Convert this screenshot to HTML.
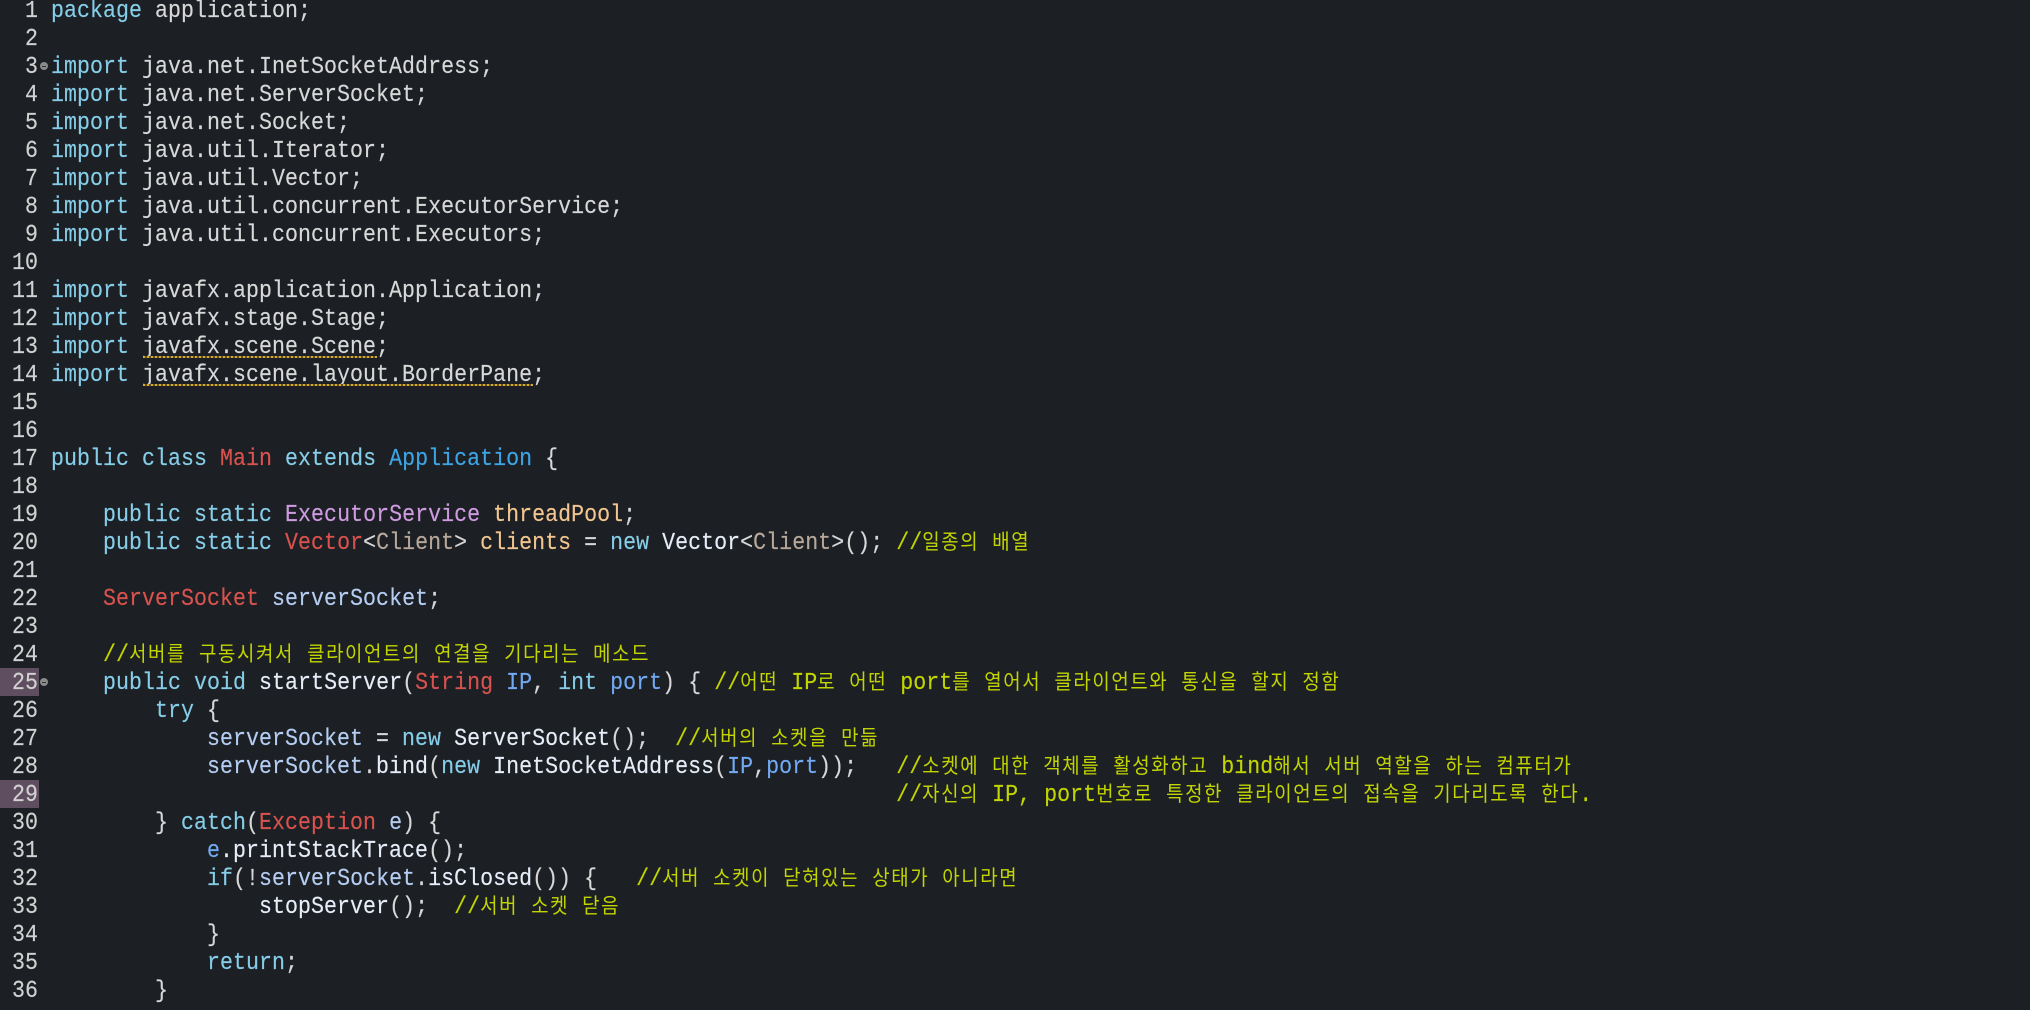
<!DOCTYPE html>
<html lang="ko"><head><meta charset="utf-8"><title>Main.java</title>
<style>
html,body{margin:0;padding:0;background:#1c2025;width:2030px;height:1010px;overflow:hidden}
#e{position:relative;width:2030px;height:1010px;overflow:hidden;font:24px/28px "Liberation Mono",monospace;letter-spacing:.044px;color:#d8d8d8;-webkit-text-stroke:.15px currentColor}
.n,.l{position:absolute;height:28px;white-space:pre}
.n{left:0;width:38px;text-align:right;color:#d2d2d2;transform:translateY(2px) scaleX(.9);transform-origin:right center}
.l{left:51px;transform:translateY(2px) scaleX(.9);transform-origin:left center}
.g{position:absolute;left:0;width:39px;height:28px;background:#5f4d60}
.f{position:absolute;left:40px;width:8px;height:8px;border-radius:50%;background:#8a8a8a}
.f:after{content:"";position:absolute;left:2px;top:3.5px;width:4px;height:1px;background:#333}
.q{position:absolute;height:2px;background:repeating-linear-gradient(90deg,#d8aa2a 0 2px,#5f5124 2px 4px)}
i{font:normal 21px/0 "Noto Sans CJK KR","NanumGothic",sans-serif;letter-spacing:1.79px;-webkit-text-stroke:0}
.k{color:#86cde8}.w{color:#e6edf8}.r{color:#d8524e}.a{color:#3da5e6}.p{color:#cf9be0}.o{color:#f3c68f}.c{color:#c2d500}.b{color:#b5cdf2}.v{color:#72a9f2}.t{color:#b8a89a}.d{color:#d8d8d8}
</style></head><body><div id="e">
<div class="g" style="top:668px"></div>
<div class="g" style="top:780px"></div>
<div class="n" style="top:-4px">1</div><div class="l" style="top:-4px"><span class="k">package</span> <span class="d">application;</span></div>
<div class="n" style="top:24px">2</div>
<div class="n" style="top:52px">3</div><div class="f" style="top:62px"></div><div class="l" style="top:52px"><span class="k">import</span> <span class="d">java.net.InetSocketAddress;</span></div>
<div class="n" style="top:80px">4</div><div class="l" style="top:80px"><span class="k">import</span> <span class="d">java.net.ServerSocket;</span></div>
<div class="n" style="top:108px">5</div><div class="l" style="top:108px"><span class="k">import</span> <span class="d">java.net.Socket;</span></div>
<div class="n" style="top:136px">6</div><div class="l" style="top:136px"><span class="k">import</span> <span class="d">java.util.Iterator;</span></div>
<div class="n" style="top:164px">7</div><div class="l" style="top:164px"><span class="k">import</span> <span class="d">java.util.Vector;</span></div>
<div class="n" style="top:192px">8</div><div class="l" style="top:192px"><span class="k">import</span> <span class="d">java.util.concurrent.ExecutorService;</span></div>
<div class="n" style="top:220px">9</div><div class="l" style="top:220px"><span class="k">import</span> <span class="d">java.util.concurrent.Executors;</span></div>
<div class="n" style="top:248px">10</div>
<div class="n" style="top:276px">11</div><div class="l" style="top:276px"><span class="k">import</span> <span class="d">javafx.application.Application;</span></div>
<div class="n" style="top:304px">12</div><div class="l" style="top:304px"><span class="k">import</span> <span class="d">javafx.stage.Stage;</span></div>
<div class="n" style="top:332px">13</div><div class="l" style="top:332px"><span class="k">import</span> <span class="d">javafx.scene.Scene;</span></div>
<div class="q" style="left:143px;top:356px;width:234px"></div>
<div class="n" style="top:360px">14</div><div class="l" style="top:360px"><span class="k">import</span> <span class="d">javafx.scene.layout.BorderPane;</span></div>
<div class="q" style="left:143px;top:384px;width:390px"></div>
<div class="n" style="top:388px">15</div>
<div class="n" style="top:416px">16</div>
<div class="n" style="top:444px">17</div><div class="l" style="top:444px"><span class="k">public class</span> <span class="r">Main</span> <span class="k">extends</span> <span class="a">Application</span> {</div>
<div class="n" style="top:472px">18</div>
<div class="n" style="top:500px">19</div><div class="l" style="top:500px">    <span class="k">public static</span> <span class="p">ExecutorService</span> <span class="o">threadPool</span>;</div>
<div class="n" style="top:528px">20</div><div class="l" style="top:528px">    <span class="k">public static</span> <span class="r">Vector</span>&lt;<span class="t">Client</span>&gt; <span class="o">clients</span> = <span class="k">new</span> <span class="w">Vector</span>&lt;<span class="t">Client</span>&gt;(); <span class="c">//<i>일종의</i> <i>배열</i></span></div>
<div class="n" style="top:556px">21</div>
<div class="n" style="top:584px">22</div><div class="l" style="top:584px">    <span class="r">ServerSocket</span> <span class="b">serverSocket</span>;</div>
<div class="n" style="top:612px">23</div>
<div class="n" style="top:640px">24</div><div class="l" style="top:640px">    <span class="c">//<i>서버를</i> <i>구동시켜서</i> <i>클라이언트의</i> <i>연결을</i> <i>기다리는</i> <i>메소드</i></span></div>
<div class="n" style="top:668px">25</div><div class="f" style="top:678px"></div><div class="l" style="top:668px">    <span class="k">public void</span> <span class="w">startServer</span>(<span class="r">String</span> <span class="v">IP</span>, <span class="k">int</span> <span class="v">port</span>) { <span class="c">//<i>어떤</i> IP<i>로</i> <i>어떤</i> port<i>를</i> <i>열어서</i> <i>클라이언트와</i> <i>통신을</i> <i>할지</i> <i>정함</i></span></div>
<div class="n" style="top:696px">26</div><div class="l" style="top:696px">        <span class="k">try</span> {</div>
<div class="n" style="top:724px">27</div><div class="l" style="top:724px">            <span class="b">serverSocket</span> = <span class="k">new</span> <span class="w">ServerSocket</span>();  <span class="c">//<i>서버의</i> <i>소켓을</i> <i>만듦</i></span></div>
<div class="n" style="top:752px">28</div><div class="l" style="top:752px">            <span class="b">serverSocket</span>.<span class="w">bind</span>(<span class="k">new</span> <span class="w">InetSocketAddress</span>(<span class="v">IP</span>,<span class="v">port</span>));   <span class="c">//<i>소켓에</i> <i>대한</i> <i>객체를</i> <i>활성화하고</i> bind<i>해서</i> <i>서버</i> <i>역할을</i> <i>하는</i> <i>컴퓨터가</i></span></div>
<div class="n" style="top:780px">29</div><div class="l" style="top:780px">                                                                 <span class="c">//<i>자신의</i> IP, port<i>번호로</i> <i>특정한</i> <i>클라이언트의</i> <i>접속을</i> <i>기다리도록</i> <i>한다</i>.</span></div>
<div class="n" style="top:808px">30</div><div class="l" style="top:808px">        } <span class="k">catch</span>(<span class="r">Exception</span> <span class="b">e</span>) {</div>
<div class="n" style="top:836px">31</div><div class="l" style="top:836px">            <span class="v">e</span><span class="w">.printStackTrace</span>();</div>
<div class="n" style="top:864px">32</div><div class="l" style="top:864px">            <span class="k">if</span>(!<span class="b">serverSocket</span>.<span class="w">isClosed</span>()) {   <span class="c">//<i>서버</i> <i>소켓이</i> <i>닫혀있는</i> <i>상태가</i> <i>아니라면</i></span></div>
<div class="n" style="top:892px">33</div><div class="l" style="top:892px">                <span class="w">stopServer</span>();  <span class="c">//<i>서버</i> <i>소켓</i> <i>닫음</i></span></div>
<div class="n" style="top:920px">34</div><div class="l" style="top:920px">            }</div>
<div class="n" style="top:948px">35</div><div class="l" style="top:948px">            <span class="k">return</span>;</div>
<div class="n" style="top:976px">36</div><div class="l" style="top:976px">        }</div>
</div></body></html>
